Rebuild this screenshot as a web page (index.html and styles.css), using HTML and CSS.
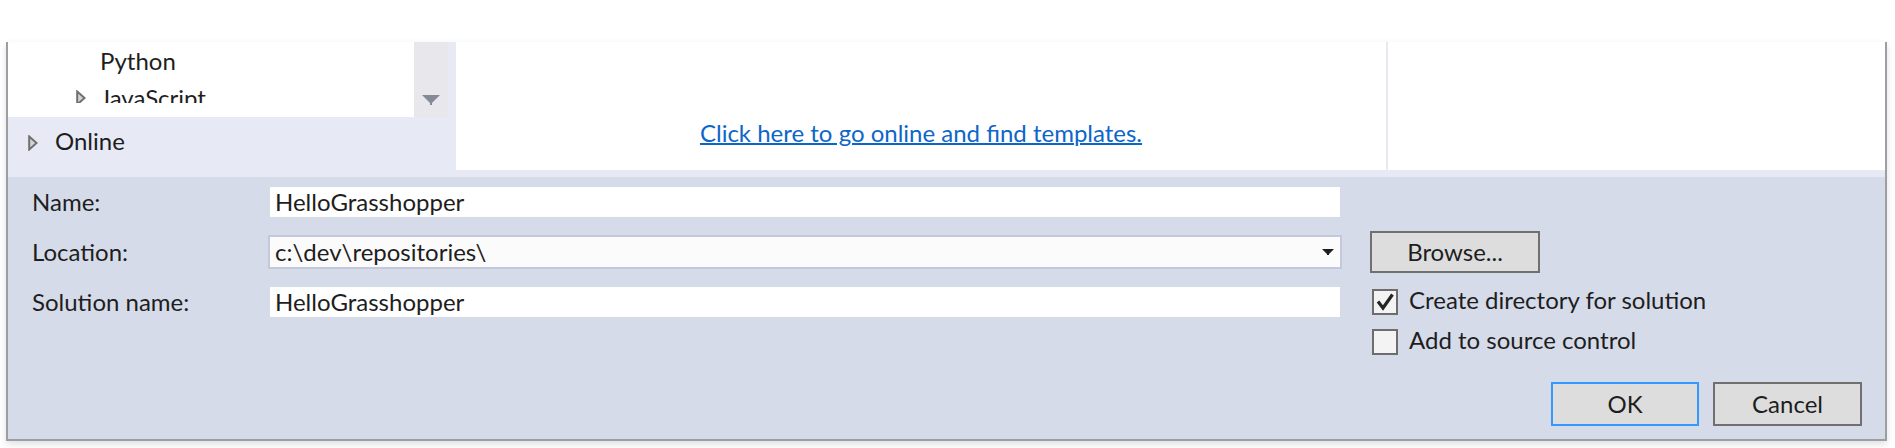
FILE: index.html
```html
<!DOCTYPE html>
<html lang="en">
<head>
<meta charset="utf-8">
<title>New Project</title>
<link rel="stylesheet" href="styles.css">
</head>
<body>
<div class="page">
  <div class="dialog">
    <div class="top">
      <div class="nav">
        <div class="nav-tree">
          <div class="tree">
            <div class="tree-clip">
              <div class="tree-row">
                <span class="exp-slot"></span>
                <span class="tree-text">Python</span>
              </div>
              <div class="tree-row">
                <svg class="exp" viewBox="0 0 10 16" width="10" height="16"><polygon points="1.2,1.5 8.6,8 1.2,14.5" /></svg>
                <span class="tree-text">JavaScript</span>
              </div>
            </div>
          </div>
          <div class="vscroll">
            <svg class="vscroll-arrow" viewBox="0 0 18 10" width="18" height="10"><polygon points="0,0 18,0 10,8 10,10 8,10 8,8" /></svg>
          </div>
        </div>
        <div class="nav-online">
          <svg class="exp" viewBox="0 0 10 16" width="10" height="16"><polygon points="1.2,1.5 8.6,8 1.2,14.5" /></svg>
          <span class="tree-text">Online</span>
        </div>
      </div>
      <div class="center">
        <a class="link" href="#">Click here to go online and find templates.</a>
      </div>
      <div class="sep"></div>
      <div class="details"></div>
    </div>
    <div class="strip"></div>
    <div class="bottom">
      <div class="form-row">
        <div class="fields">
          <label class="label">Name:</label>
          <input class="textbox" type="text" value="HelloGrasshopper">
          <label class="label">Location:</label>
          <div class="combo">
            <span class="combo-text">c:\dev\repositories\</span>
            <svg class="combo-arrow" viewBox="0 0 12 6" width="12" height="6"><polygon points="0,0 12,0 7,5 7,6 5,6 5,5" /></svg>
          </div>
          <label class="label">Solution name:</label>
          <input class="textbox" type="text" value="HelloGrasshopper">
        </div>
        <div class="side">
          <button class="btn btn-browse" type="button">Browse...</button>
          <div class="check check-first">
            <span class="box">
              <svg class="tick" viewBox="0 0 22 22" width="22" height="22"><polyline points="4,10.5 9,17 18.5,3.5" /></svg>
            </span>
            <span class="check-label">Create directory for solution</span>
          </div>
          <div class="check check-second">
            <span class="box"></span>
            <span class="check-label">Add to source control</span>
          </div>
        </div>
      </div>
      <div class="buttons">
        <button class="btn btn-ok" type="button">OK</button>
        <button class="btn btn-cancel" type="button">Cancel</button>
      </div>
    </div>
  </div>
</div>
</body>
</html>
```
FILE: styles.css
```css
* {
  box-sizing: border-box;
}

html, body {
  margin: 0;
  padding: 0;
  background: #ffffff;
}

body {
  font-family: Lato, "Noto Sans", sans-serif;
  font-size: 24px;
  color: #1e1e1e;
  width: 1895px;
  height: 448px;
  overflow: hidden;
}

.page {
  padding-top: 42px;
  padding-left: 6px;
}

.dialog {
  width: 1881px;
  border-left: 2px solid #9d9ea3;
  border-right: 2px solid #9d9ea3;
  border-bottom: 2px solid #9d9ea3;
  box-shadow: 0 3px 7px rgba(0, 0, 0, 0.13);
}

/* ---------- top area ---------- */
.top {
  display: flex;
  height: 128px;
}

.nav {
  width: 448px;
  background: #e7eaf5;
  display: flex;
  flex-direction: column;
}

.nav-tree {
  height: 75px;
  display: flex;
}

.tree {
  width: 406px;
  background: #ffffff;
}

.tree-clip {
  height: 61px;
  overflow: hidden;
}

.tree-row {
  height: 37px;
  display: flex;
  align-items: center;
  padding-left: 68px;
}

.exp-slot {
  width: 10px;
  height: 16px;
  margin-right: 14px;
}

.exp {
  display: block;
  flex: none;
  margin-right: 14px;
}

.exp polygon {
  fill: #d4d4d4;
  stroke: #6f6f6f;
  stroke-width: 2;
  stroke-linejoin: miter;
}

.tree-text {
  line-height: 37px;
  white-space: nowrap;
}

.vscroll {
  width: 34px;
  background: #e8e8ec;
  display: flex;
  justify-content: center;
  padding-top: 53px;
}

.vscroll-arrow {
  display: block;
}

.vscroll-arrow polygon {
  fill: #868999;
}

.nav-online {
  height: 53px;
  display: flex;
  align-items: flex-start;
  padding-left: 20px;
  padding-top: 9px;
}

.nav-online .exp {
  margin-top: 9px;
  margin-right: 17px;
}

.nav-online .tree-text {
  line-height: 30px;
}

.center {
  width: 930px;
  background: #ffffff;
  display: flex;
  justify-content: center;
  align-items: flex-start;
  padding-top: 76px;
}

.link {
  color: #0e66c8;
  line-height: 30px;
  text-decoration: underline;
  text-decoration-thickness: 2px;
  text-underline-offset: 1px;
  white-space: nowrap;
}

.sep {
  width: 2px;
  background: #e7eaf5;
}

.details {
  flex: 1;
  background: #ffffff;
}

.strip {
  height: 7px;
  background: #e7eaf5;
}

/* ---------- bottom area ---------- */
.bottom {
  height: 262px;
  background: #d6dbe9;
  padding: 10px 23px 13px 24px;
}

.form-row {
  display: flex;
  align-items: flex-start;
}

.fields {
  display: grid;
  grid-template-columns: 238px 1070px;
  grid-auto-rows: 30px;
  row-gap: 20px;
}

.label {
  line-height: 30px;
  white-space: nowrap;
}

.textbox {
  display: block;
  width: 100%;
  height: 30px;
  margin: 0;
  border: none;
  outline: none;
  background: #ffffff;
  padding: 0 5px;
  font: inherit;
  color: #1e1e1e;
  line-height: 30px;
}

.combo {
  margin: -2px;
  height: 34px;
  border: 2px solid #c3c9da;
  background: #fbfbfb;
  display: flex;
  align-items: center;
  padding: 0 6px 0 5px;
}

.combo-text {
  flex: 1;
  line-height: 30px;
  white-space: nowrap;
}

.combo-arrow {
  display: block;
}

.combo-arrow polygon {
  fill: #1e1e1e;
}

.side {
  margin-left: 30px;
  padding-top: 44px;
  display: flex;
  flex-direction: column;
  align-items: flex-start;
}

.btn {
  margin: 0;
  padding: 0;
  font: inherit;
  color: #1e1e1e;
  background: #dddddd;
  border: 2px solid #707070;
  border-radius: 0;
  line-height: 38px;
  text-align: center;
}

.btn-browse {
  width: 170px;
  height: 42px;
}

.check {
  display: flex;
  align-items: flex-start;
  height: 26px;
  margin-left: 2px;
}

.check-first {
  margin-top: 16px;
}

.check-second {
  margin-top: 14px;
}

.box {
  width: 26px;
  height: 26px;
  flex: none;
  border: 2px solid #6d6d6d;
  background: #f3f3f3;
  display: block;
}

.tick {
  display: block;
}

.tick polyline {
  fill: none;
  stroke: #242424;
  stroke-width: 3.2;
}

.check-label {
  margin-left: 11px;
  margin-top: -2px;
  line-height: 26px;
  white-space: nowrap;
}

.buttons {
  display: flex;
  justify-content: flex-end;
  gap: 14px;
  margin-top: 27px;
}

.btn-ok {
  width: 148px;
  height: 44px;
  line-height: 40px;
  border-color: #3399ff;
}

.btn-cancel {
  width: 149px;
  height: 44px;
  line-height: 40px;
}
```
